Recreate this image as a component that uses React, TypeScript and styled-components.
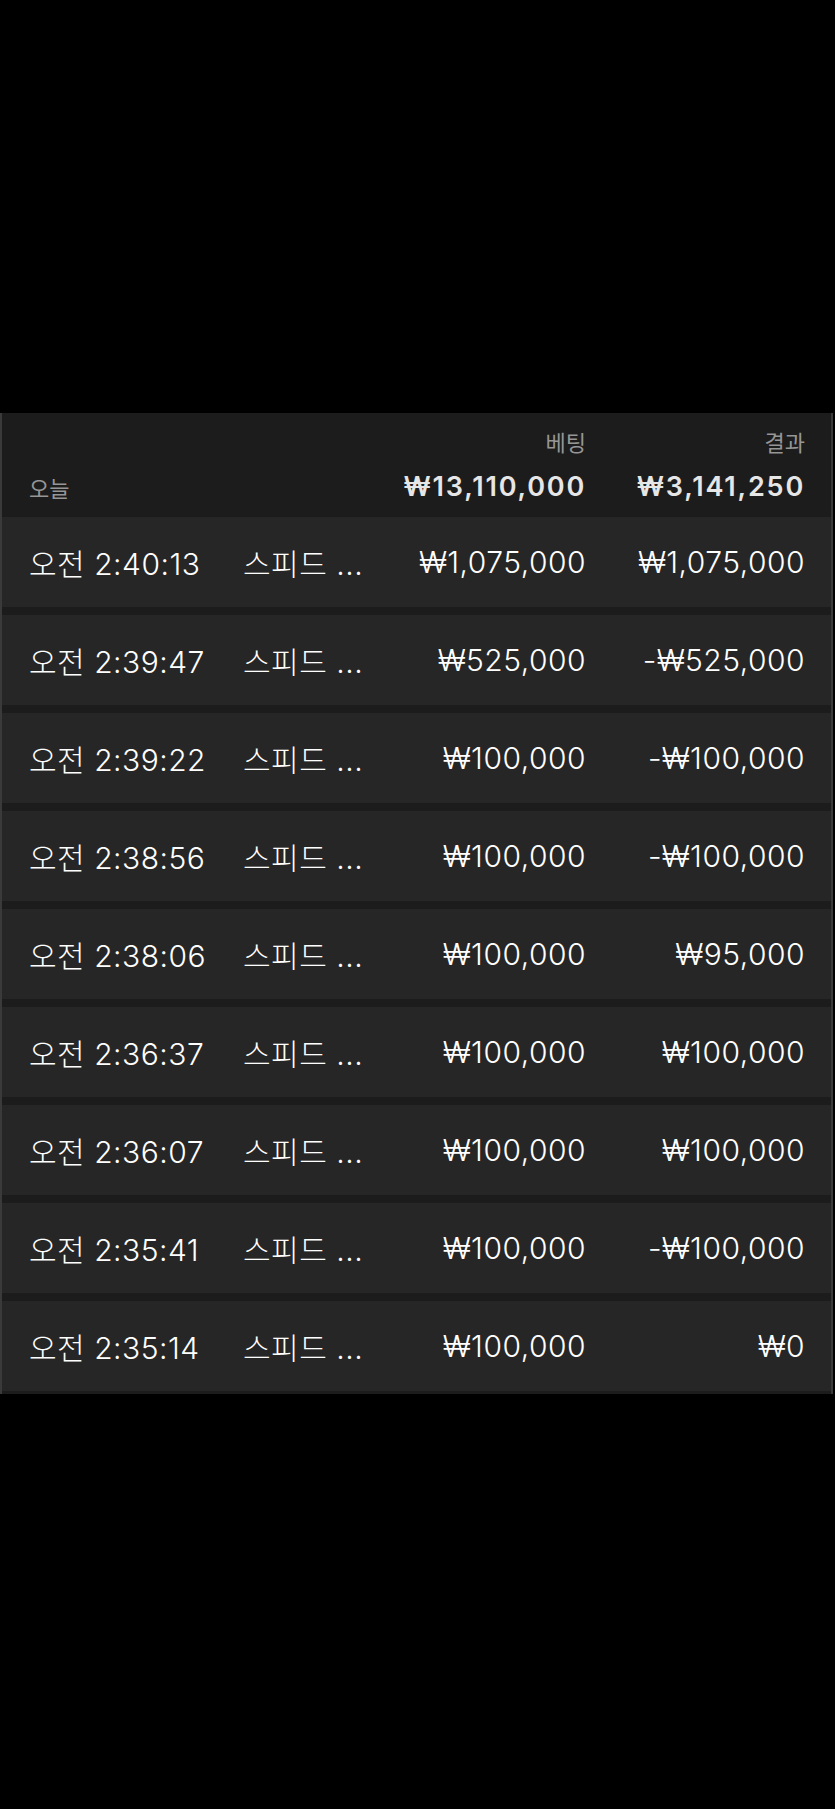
import styled, { createGlobalStyle } from "styled-components";

interface BetRow {
  id: number;
  time: string;
  game: string;
  bet: string;
  result: string;
}

const rows: BetRow[] = [
  { id: 1, time: "오전 2:40:13", game: "스피드 ...", bet: "₩1,075,000", result: "₩1,075,000" },
  { id: 2, time: "오전 2:39:47", game: "스피드 ...", bet: "₩525,000", result: "-₩525,000" },
  { id: 3, time: "오전 2:39:22", game: "스피드 ...", bet: "₩100,000", result: "-₩100,000" },
  { id: 4, time: "오전 2:38:56", game: "스피드 ...", bet: "₩100,000", result: "-₩100,000" },
  { id: 5, time: "오전 2:38:06", game: "스피드 ...", bet: "₩100,000", result: "₩95,000" },
  { id: 6, time: "오전 2:36:37", game: "스피드 ...", bet: "₩100,000", result: "₩100,000" },
  { id: 7, time: "오전 2:36:07", game: "스피드 ...", bet: "₩100,000", result: "₩100,000" },
  { id: 8, time: "오전 2:35:41", game: "스피드 ...", bet: "₩100,000", result: "-₩100,000" },
  { id: 9, time: "오전 2:35:14", game: "스피드 ...", bet: "₩100,000", result: "₩0" },
];

const GlobalStyle = createGlobalStyle`
  html, body {
    margin: 0;
    padding: 0;
    background: #000;
  }
  body {
    font-family: Inter, "Noto Sans CJK KR", sans-serif;
    -webkit-font-smoothing: antialiased;
  }
`;

const Page = styled.div`
  min-height: 1809px;
  background: #000;
  padding-top: 413px;
  box-sizing: border-box;
`;

const Panel = styled.section`
  width: 833px;
  box-sizing: border-box;
  background: #1c1c1c;
  border-left: 2px solid #3a3a3a;
  border-right: 2px solid #3a3a3a;
  padding-bottom: 3px;
`;

const Grid = styled.div`
  display: grid;
  grid-template-columns: 214px 141px 202px 219px;
  padding: 0 26px 0 27px;
`;

const Header = styled(Grid)`
  height: 104px;
  box-sizing: border-box;
  padding-top: 16px;
  padding-bottom: 13px;
  grid-template-rows: 28px 34px;
  row-gap: 13px;
`;

const Label = styled.div<{ $col: number }>`
  grid-column: ${(p) => p.$col};
  grid-row: 1;
  text-align: right;
  font-size: 22px;
  line-height: 28px;
  color: #969696;
`;

const Today = styled.div`
  grid-column: 1;
  grid-row: 2;
  align-self: end;
  font-size: 22px;
  line-height: 30px;
  color: #969696;
`;

const Total = styled.div<{ $col: number }>`
  grid-column: ${(p) => p.$col};
  grid-row: 2;
  text-align: right;
  font-size: 27px;
  line-height: 34px;
  font-weight: 600;
  letter-spacing: 1.8px;
  color: #e6e6e6;
`;

const List = styled.div`
  display: flex;
  flex-direction: column;
  gap: 8px;
`;

const Row = styled(Grid)`
  height: 90px;
  align-items: center;
  background: #262626;
  color: #fff;
  font-size: 30px;
  font-weight: 300;
  letter-spacing: 0.5px;
`;

const Cell = styled.div<{ $right?: boolean }>`
  white-space: nowrap;
  text-align: ${(p) => (p.$right ? "right" : "left")};
`;

function App() {
  return (
    <>
      <GlobalStyle />
      <Page>
        <Panel>
          <Header>
            <Label $col={3}>베팅</Label>
            <Label $col={4}>결과</Label>
            <Today>오늘</Today>
            <Total $col={3}>₩13,110,000</Total>
            <Total $col={4}>₩3,141,250</Total>
          </Header>
          <List>
            {rows.map((r) => (
              <Row key={r.id}>
                <Cell>{r.time}</Cell>
                <Cell>{r.game}</Cell>
                <Cell $right>{r.bet}</Cell>
                <Cell $right>{r.result}</Cell>
              </Row>
            ))}
          </List>
        </Panel>
      </Page>
    </>
  );
}

export default App;
